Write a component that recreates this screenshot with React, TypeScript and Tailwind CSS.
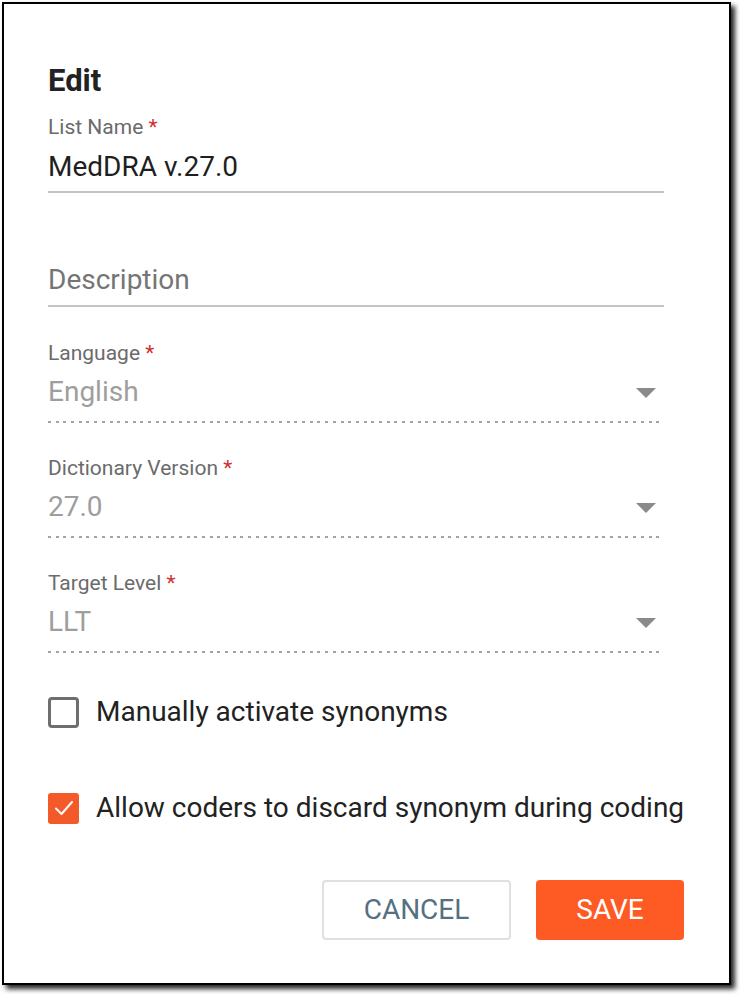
import React from "react";

const font = { fontFamily: "Roboto, 'Noto Sans', sans-serif" };

function Label({ text }: { text: string }) {
  return (
    <div className="text-[21px] leading-[26px] text-[#6b6b6b]">
      {text} <span className="text-[#d32f2f]">*</span>
    </div>
  );
}

function SelectField({ label, value }: { label: string; value: string }) {
  return (
    <div className="w-[616px]">
      <Label text={label} />
      <div className="flex items-center justify-between h-[34px] mt-[9px] mb-[12px]">
        <span className="text-[28px] leading-[34px] text-[#9e9e9e]">{value}</span>
        <svg width="20" height="10" viewBox="0 0 20 10" className="mr-[8px] mt-[2px]">
          <path d="M0 0 L20 0 L10 10 Z" fill="#8a8a8a" />
        </svg>
      </div>
      <div className="h-[2px] bg-[repeating-linear-gradient(to_right,#a3a3a3_0px,#a3a3a3_3px,transparent_3px,transparent_7.7px)]" />
    </div>
  );
}

export default function App() {
  return (
    <div className="w-[740px] h-[994px] bg-white p-[2px]" style={font}>
      <div className="w-[729px] h-[983px] border-2 border-black bg-white shadow-[4px_4px_5px_rgba(0,0,0,0.85)] pl-[44px] pt-[58px]">
        <h1 className="text-[31px] leading-[38px] font-bold text-[#222]">Edit</h1>

        <div className="mt-[14px] w-[616px]">
          <Label text="List Name" />
          <div className="pt-[10px] pb-[7px] text-[28px] leading-[34px] text-[#1f1f1f] border-b-2 border-[#c4c4c4]">
            MedDRA v.27.0
          </div>
        </div>

        <div className="mt-[70px] w-[616px] border-b-2 border-[#c4c4c4] pb-[8px] text-[28px] leading-[34px] text-[#757575]">
          Description
        </div>

        <div className="mt-[33px] flex flex-col gap-[32px]">
          <SelectField label="Language" value="English" />
          <SelectField label="Dictionary Version" value="27.0" />
          <SelectField label="Target Level" value="LLT" />
        </div>

        <div className="mt-[42px] flex items-center gap-[17px] h-[34px]">
          <div className="w-[31px] h-[31px] rounded-[4px] border-[3px] border-[#6e6e6e]" />
          <span className="text-[28px] leading-[34px] text-[#222]">Manually activate synonyms</span>
        </div>

        <div className="mt-[62px] flex items-center gap-[17px] h-[34px]">
          <div className="w-[31px] h-[31px] rounded-[3px] bg-[#f4592a] flex items-center justify-center">
            <svg width="20" height="16" viewBox="0 0 20 16">
              <path d="M2 8.5 L7.5 14 L18 2" fill="none" stroke="white" strokeWidth="2" strokeLinecap="round" strokeLinejoin="round" />
            </svg>
          </div>
          <span className="text-[28px] leading-[34px] text-[#222]">Allow coders to discard synonym during coding</span>
        </div>

        <div className="mt-[55px] w-[636px] flex justify-end gap-[25px]">
          <button className="w-[189px] h-[60px] rounded-[4px] border-2 border-[#e0e0e0] text-[28px] text-[#557080] bg-white">
            CANCEL
          </button>
          <button className="w-[148px] h-[60px] rounded-[4px] bg-[#fe5a24] text-[28px] text-white">
            SAVE
          </button>
        </div>
      </div>
    </div>
  );
}
